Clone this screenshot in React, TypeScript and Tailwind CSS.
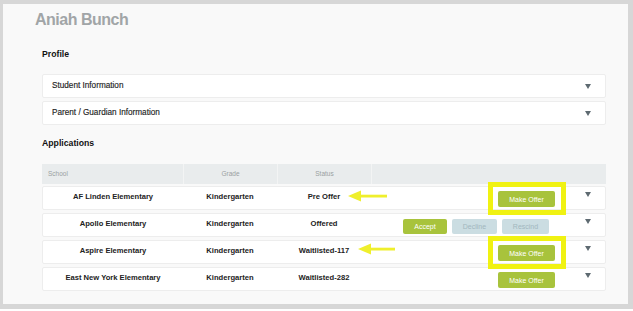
import React from "react";

const Caret = () => (
  <svg width="6" height="5" viewBox="0 0 6 5" className="block">
    <polygon points="0,0 6,0 3,5" fill="#5e6a71" />
  </svg>
);

const YellowArrow = ({ left, top, length }: { left: number; top: number; length: number }) => (
  <svg
    width={length}
    height={12}
    viewBox={`0 0 ${length} 12`}
    className="absolute"
    style={{ left, top }}
  >
    <polygon points={`0,6 13,0.5 13,11.5`} fill="#efef2c" />
    <rect x="11" y="4.7" width={length - 11} height="2.8" fill="#efef2c" />
  </svg>
);

type Row = {
  school: string;
  status: string;
  kind: "offer" | "decide";
};

const rows: Row[] = [
  { school: "AF Linden Elementary", status: "Pre Offer", kind: "offer" },
  { school: "Apollo Elementary", status: "Offered", kind: "decide" },
  { school: "Aspire Elementary", status: "Waitlisted-117", kind: "offer" },
  { school: "East New York Elementary", status: "Waitlisted-282", kind: "offer" },
];

function ProfileRow({ label, first }: { label: string; first?: boolean }) {
  return (
    <div
      className={`flex h-[24px] items-center justify-between rounded-[2px] border border-[#ededed] bg-white ${
        first ? "" : "mt-[3px]"
      }`}
    >
      <span className="pl-[9px] text-[8.2px] leading-[10px] text-[#1e1e1e] [-webkit-text-stroke:0.15px_#1e1e1e]">
        {label}
      </span>
      <div className="w-[50px] pl-[30px]">
        <Caret />
      </div>
    </div>
  );
}

export default function App() {
  return (
    <div className="relative h-[311px] w-[633px] bg-white font-['Liberation_Sans',Arial,sans-serif]">
      <div className="h-[309px] border-b-[5px] border-l-[3px] border-r-[5px] border-t-[4px] border-[#d7d7d7] bg-[#f9f9f9]">
        <h1 className="ml-[32px] mt-[7px] text-[16px] font-bold leading-[18px] tracking-[-0.5px] text-[#a1a5a7]">
          Aniah Bunch
        </h1>

        <div className="ml-[39px] mr-[22px]">
          <h2 className="mt-[20px] text-[8.7px] font-bold leading-[10px] text-[#111]">Profile</h2>
          <div className="mt-[15px]">
            <ProfileRow label="Student Information" first />
            <ProfileRow label="Parent / Guardian Information" />
          </div>

          <h2 className="mt-[13px] text-[8.7px] font-bold leading-[10px] text-[#111]">Applications</h2>

          <div className="mt-[16px] flex h-[20px] items-center bg-[#e9eced] text-[6.5px] leading-[8px] text-[#9a9fa1]">
            <div className="flex h-full w-[141px] items-center pl-[6px]">School</div>
            <div className="flex h-full w-[94px] items-center justify-center border-l border-[#f3f4f4]">Grade</div>
            <div className="flex h-full w-[94px] items-center justify-center border-l border-[#f3f4f4]">Status</div>
            <div className="h-full flex-1 border-l border-[#f3f4f4]" />
          </div>

          <div className="mt-[2px] flex flex-col gap-[3px]">
            {rows.map((r) => (
              <div
                key={r.school}
                className="flex h-[24px] items-start rounded-[2px] border border-[#ededed] bg-white pt-[4px] text-[7.6px] font-bold leading-[11px] text-[#222]"
              >
                <div className="w-[140px] text-center">{r.school}</div>
                <div className="w-[94px] text-center">Kindergarten</div>
                <div className="w-[94px] text-center">{r.status}</div>
                <div className="flex flex-1 justify-end">
                  {r.kind === "offer" ? (
                    <button className="flex h-[16px] w-[57px] items-center justify-center rounded-[2px] bg-[#a8c33c] text-[7px] font-normal text-white">
                      Make Offer
                    </button>
                  ) : (
                    <div className="mr-[6px] mt-[1px] flex gap-[5px] text-[7px] font-normal">
                      <button className="flex h-[15px] w-[44px] items-center justify-center rounded-[2px] bg-[#a8c33c] text-white">
                        Accept
                      </button>
                      <button className="flex h-[15px] w-[45px] items-center justify-center rounded-[2px] bg-[#cbdde2] text-[#a2b7be]">
                        Decline
                      </button>
                      <button className="flex h-[15px] w-[47px] items-center justify-center rounded-[2px] bg-[#cbdde2] text-[#a2b7be]">
                        Rescind
                      </button>
                    </div>
                  )}
                </div>
                <div className="mt-[1px] w-[50px] pl-[30px]">
                  <Caret />
                </div>
              </div>
            ))}
          </div>
        </div>
      </div>

      {/* annotation highlights */}
      <div className="absolute left-[488px] top-[182px] h-[33px] w-[78px] border-[5px] border-[#f0f212]" />
      <div className="absolute left-[488px] top-[236px] h-[33px] w-[78px] border-[5px] border-[#f0f212]" />
      <YellowArrow left={348} top={190} length={39} />
      <YellowArrow left={358} top={243} length={37} />
    </div>
  );
}
